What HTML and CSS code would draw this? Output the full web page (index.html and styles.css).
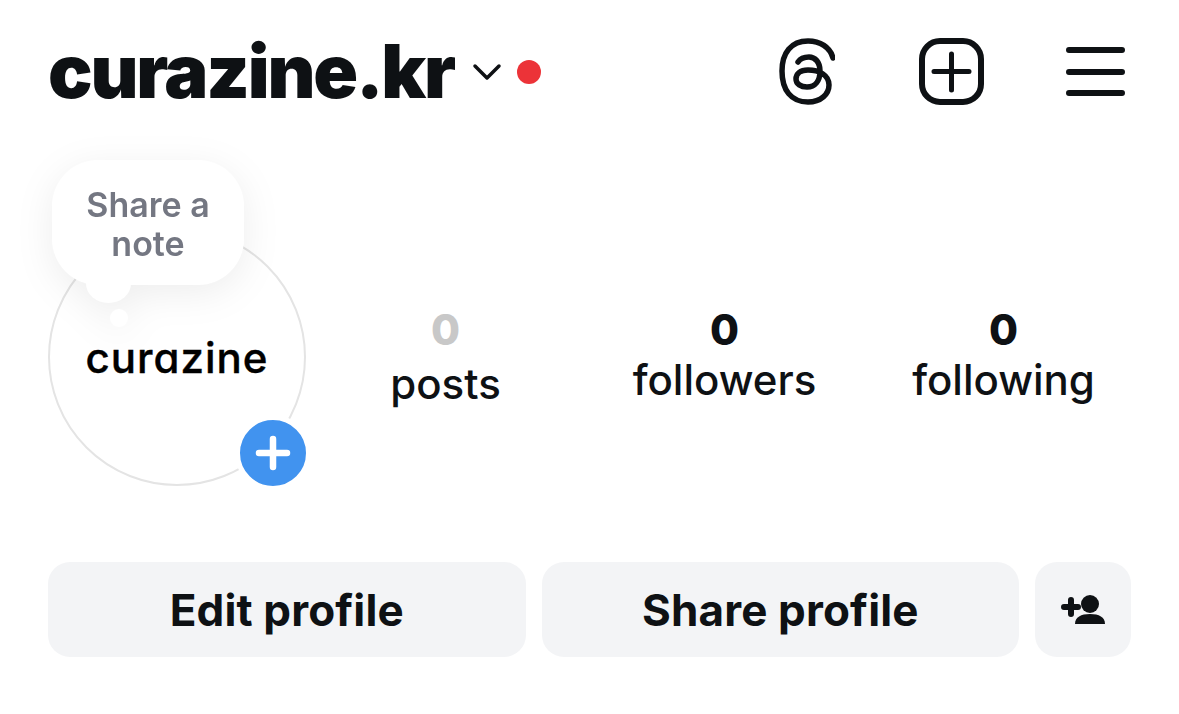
FILE: index.html
```html
<!DOCTYPE html>
<html lang="en">
<head>
    <meta charset="UTF-8">
    <meta name="viewport" content="width=device-width, initial-scale=1.0">
    <title>curazine.kr</title>
    <link rel="stylesheet" href="styles.css">
</head>
<body>
    <div class="container">
        <header class="top-bar">
            <div class="account">
                <h1 class="username">curazine.kr</h1>
                <svg class="chevron" viewBox="0 0 30 18"><path d="M3 3 L15 15 L27 3"/></svg>
                <span class="red-dot"></span>
            </div>
            <div class="top-icons">
                <svg class="icon-threads" viewBox="0 0 56 67"><path d="M54 20 C51 9 41 3 29 3 C12 3 3 15 3 33 C3 52 12 64 29 64 C42 64 50 56 50 47 C50 37 40 32 29 32 C21 32 17 36 17 41 C17 46 22 49 28 49 C36 49 41 43 41 33 C41 24 36 19 30 19 C25 19 21 21 19 24"/></svg>
                <svg class="icon-new" viewBox="0 0 65 67"><rect x="3" y="3" width="59" height="61" rx="18"/><path class="thin" d="M15 33.5 H50 M32.5 16 V52"/></svg>
                <svg class="icon-menu" viewBox="0 0 60 50"><path d="M3 3 H56 M3 25 H56 M3 46 H56"/></svg>
            </div>
        </header>

        <section class="profile">
            <div class="avatar">
                <span class="logo">curazine</span>
                <div class="note-bubble">
                    <div class="note">Share a note</div>
                    <span class="note-tail"></span>
                    <span class="note-dot"></span>
                </div>
                <span class="add-story">
                    <svg viewBox="0 0 36 36"><path d="M4 18 H32 M18 4 V32"/></svg>
                </span>
            </div>
            <div class="stat stat-posts"><b class="zero">0</b><span>posts</span></div>
            <div class="stat"><b>0</b><span>followers</span></div>
            <div class="stat"><b>0</b><span>following</span></div>
        </section>

        <div class="actions">
            <button class="btn">Edit profile</button>
            <button class="btn">Share profile</button>
            <button class="btn btn-icon">
                <svg viewBox="0 0 44 30"><path class="plus" d="M3 12 H17 M10 5 V19"/><circle cx="29" cy="9" r="9"/><path d="M14 29 C14 22 20 19 29 19 C38 19 44 22 44 29 Z"/></svg>
            </button>
        </div>
    </div>
</body>
</html>
```

FILE: styles.css
```css
body {
    margin: 0;
    background-color: #fff;
    color: #0e1114;
    font-family: Inter, "Liberation Sans", sans-serif;
}
.container {
    padding: 38px 48px 0;
}
.top-bar {
    display: flex;
    justify-content: space-between;
    align-items: center;
    height: 67px;
}
.account {
    display: flex;
    align-items: center;
}
.username {
    margin: 0;
    font-size: 74px;
    font-weight: 900;
    letter-spacing: -2.2px;
    line-height: 69px;
}
.chevron {
    width: 30px;
    height: 18px;
    margin-left: 18px;
    fill: none;
    stroke: #0e1114;
    stroke-width: 3.5;
    stroke-linecap: round;
    stroke-linejoin: round;
}
.red-dot {
    width: 24px;
    height: 24px;
    margin-left: 15px;
    border-radius: 50%;
    background-color: #ec3338;
}
.top-icons {
    display: flex;
    align-items: center;
    margin-right: 5px;
}
.top-icons svg {
    fill: none;
    stroke: #0e1114;
    stroke-width: 6;
    stroke-linecap: round;
}
.top-icons .icon-threads {
    width: 56px;
    height: 67px;
    stroke-width: 5.5;
}
.top-icons .thin {
    stroke-width: 5;
}
.icon-new {
    width: 65px;
    height: 67px;
    margin-left: 84px;
}
.icon-menu {
    width: 60px;
    height: 50px;
    margin-left: 82px;
}
.profile {
    display: grid;
    grid-template-columns: 258px repeat(3, 279px);
    margin-top: 123px;
}
.avatar {
    position: relative;
    display: flex;
    align-items: center;
    justify-content: center;
    box-sizing: border-box;
    width: 258px;
    height: 258px;
    border: 2px solid #e4e4e4;
    border-radius: 50%;
}
.logo {
    font-size: 42px;
    font-weight: 500;
    font-feature-settings: "cv11";
    color: #000;
    letter-spacing: 1px;
    -webkit-text-stroke: 0.4px #000;
}
.note-bubble {
    position: absolute;
    top: -70px;
    left: 2px;
    width: 192px;
    height: 160px;
    filter: drop-shadow(0 8px 18px rgba(0, 0, 0, 0.07));
}
.note {
    box-sizing: border-box;
    width: 192px;
    height: 125px;
    padding: 25px 30px 0;
    background-color: #fff;
    border-radius: 46px;
    color: #747782;
    font-size: 34px;
    font-weight: 600;
    line-height: 39px;
    text-align: center;
}
.note-tail {
    position: absolute;
    top: 104px;
    left: 34px;
    width: 45px;
    height: 39px;
    background-color: #fff;
    border-radius: 50%;
}
.note-dot {
    position: absolute;
    top: 149px;
    left: 58px;
    width: 18px;
    height: 18px;
    background-color: #fff;
    border-radius: 50%;
}
.add-story {
    position: absolute;
    right: -7px;
    bottom: -7px;
    display: flex;
    align-items: center;
    justify-content: center;
    width: 66px;
    height: 66px;
    background-color: #4193ef;
    border: 5px solid #fff;
    border-radius: 50%;
}
.add-story svg {
    width: 36px;
    height: 36px;
    fill: none;
    stroke: #fff;
    stroke-width: 6.5;
    stroke-linecap: round;
}
.stat {
    display: flex;
    flex-direction: column;
    align-items: center;
    padding-top: 77px;
    font-size: 42px;
    font-weight: 500;
    line-height: 49px;
}
.stat b {
    font-size: 42px;
    font-weight: 800;
    line-height: 50px;
}
.stat .zero {
    color: #c8c8c8;
}
.stat-posts span {
    margin-top: 4px;
}
.actions {
    display: flex;
    gap: 16px;
    margin-top: 76px;
}
.btn {
    width: 478px;
    height: 95px;
    padding: 0;
    background-color: #f3f4f6;
    border: none;
    border-radius: 22px;
    color: #0e1114;
    font-family: inherit;
    font-size: 44px;
    font-weight: 700;
    letter-spacing: 0.15px;
}
.btn-icon {
    display: flex;
    align-items: center;
    justify-content: center;
    width: 96px;
}
.btn-icon svg {
    width: 44px;
    height: 30px;
    fill: #0e1114;
}
.btn-icon .plus {
    fill: none;
    stroke: #0e1114;
    stroke-width: 6;
    stroke-linecap: round;
}
```
